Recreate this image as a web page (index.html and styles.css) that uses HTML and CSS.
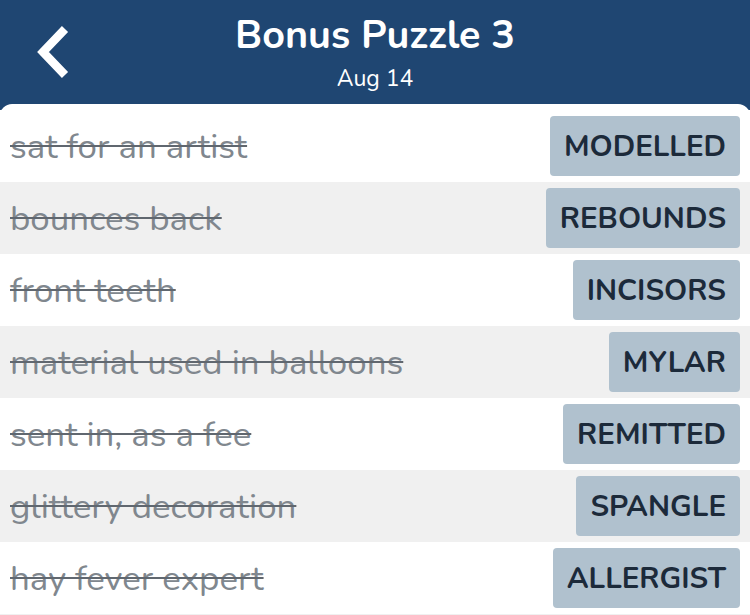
FILE: index.html
```html
<!DOCTYPE html>
<html>
<head>
<meta charset="utf-8">
<link rel="stylesheet" href="styles.css">
</head>
<body>
<header class="topbar">
  <button class="back" aria-label="Back">
    <svg width="40" height="60" viewBox="0 0 40 60"><polyline points="30,6 8,29 30,52" fill="none" stroke="#fff" stroke-width="8.5" stroke-linejoin="miter"/></svg>
  </button>
  <div class="titles">
    <div class="title">Bonus Puzzle 3</div>
    <div class="subtitle">Aug 14</div>
  </div>
</header>
<main class="card">
  <div class="row"><span class="clue">sat for an artist</span><span class="tile">MODELLED</span></div>
  <div class="row alt"><span class="clue">bounces back</span><span class="tile">REBOUNDS</span></div>
  <div class="row"><span class="clue">front teeth</span><span class="tile">INCISORS</span></div>
  <div class="row alt"><span class="clue">material used in balloons</span><span class="tile">MYLAR</span></div>
  <div class="row"><span class="clue">sent in, as a fee</span><span class="tile">REMITTED</span></div>
  <div class="row alt"><span class="clue">glittery decoration</span><span class="tile">SPANGLE</span></div>
  <div class="row"><span class="clue">hay fever expert</span><span class="tile">ALLERGIST</span></div>
  <div class="row alt"><span class="clue">&nbsp;</span><span class="tile">&nbsp;</span></div>
</main>
</body>
</html>
```
FILE: styles.css
```css
html, body {
  margin: 0;
  padding: 0;
  background: #1f4672;
  font-family: "Nunito", Lato, "Open Sans", sans-serif;
  overflow: hidden;
  height: 615px;
}
.topbar {
  position: relative;
  height: 104px;
  display: flex;
  justify-content: center;
  color: #fff;
}
.back {
  position: absolute;
  left: 35px;
  top: 23px;
  background: none;
  border: 0;
  padding: 0;
  width: 40px;
  height: 60px;
}
.back svg { display: block; }
.titles {
  display: flex;
  flex-direction: column;
  align-items: center;
  padding-top: 11px;
}
.title {
  font-size: 39.5px;
  font-weight: 700;
  line-height: 48px;
}
.subtitle {
  font-size: 23px;
  line-height: 28px;
  margin-top: 6px;
}
.card {
  background: #fff;
  border-radius: 12px 12px 0 0;
  padding-top: 6px;
}
.row {
  height: 72px;
  display: flex;
  align-items: center;
  justify-content: space-between;
  padding: 0 10px 0 10px;
  background: #fff;
}
.row.alt { background: #f0f0f0; }
.clue {
  font-size: 34.9px;
  color: #80878e;
  text-decoration: line-through;
  text-decoration-color: #60676f;
  text-decoration-thickness: 2px;
}
.tile {
  background: #b0c1ce;
  color: #1c2a3a;
  font-weight: 700;
  font-size: 29.5px;
  height: 60px;
  line-height: 60px;
  padding: 0 14px;
  border-radius: 4px;
  min-width: 20px;
}
```
